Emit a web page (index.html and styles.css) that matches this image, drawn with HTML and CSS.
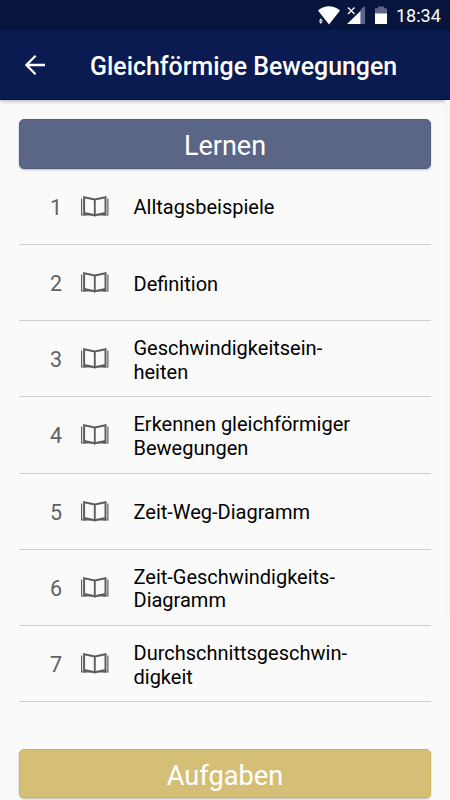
FILE: index.html
```html
<!DOCTYPE html>
<html lang="de">
<head>
<meta charset="utf-8">
<title>Gleichförmige Bewegungen</title>
<link rel="stylesheet" href="styles.css">
</head>
<body>
<svg class="defs" aria-hidden="true">
  <symbol id="book" viewBox="0 0 28 21">
    <path d="M3.1 1.2L13.8 3.4L24.5 1.2V17L13.8 19.3L3.1 17Z" fill="none" stroke="#5e5e5e" stroke-width="2"/>
    <path d="M13.8 3V20" fill="none" stroke="#5e5e5e" stroke-width="1.9"/>
    <path d="M2.5 16.6L13.7 18.4L25 16.6V19.4H15.5L13.7 20.8L12 19.4H2.5Z" fill="#5e5e5e"/>
    <path d="M.6 2.6V18.9H5M26.9 2.6V18.9H22" fill="none" stroke="#606060" stroke-width="1.2"/>
  </symbol>
</svg>
<div class="screen">
  <div class="status">
    <svg class="status-icons" viewBox="0 0 72 20">
      <path d="M0 4.4Q11-4 22 4.4L11 18.5Z" fill="#fff"/>
      <path d="M2.8 12.2L4.4 14.2V16L2.8 18L1.2 16V14.2Z" fill="#fff" stroke="#07153d" stroke-width=".3"/>
      <path d="M1.2 15.1H4.4" stroke="#07153d" stroke-width=".6"/>
      <path d="M42.5 3.5L47 0V18H42.5Z" fill="#5c648b"/>
      <path d="M29 18L42.5 5V18Z" fill="#fff"/>
      <path d="M30 1.5L36.5 8M36.5 1.5L30 8" stroke="#fff" stroke-width="1.3"/>
      <path d="M57 2.2H60V.4H66V2.2H69V8H57Z" fill="#5c648b"/>
      <path d="M57 7.5H69V18H57Z" fill="#fff"/>
    </svg>
    <span class="clock">18:34</span>
  </div>
  <header class="appbar">
    <svg class="back" viewBox="0 0 20 20"><path d="M20 10H1.6M10.6 .8L1.4 10L10.6 19.2" fill="none" stroke="#fff" stroke-width="2.3"/></svg>
    <h1>Gleichförmige Bewegungen</h1>
  </header>
  <main class="content">
    <div class="button learn">Lernen</div>
    <div class="list">
      <div class="row"><span class="num">1</span><svg class="book"><use href="#book"/></svg><span class="label">Alltagsbeispiele</span></div>
      <div class="row"><span class="num">2</span><svg class="book"><use href="#book"/></svg><span class="label">Definition</span></div>
      <div class="row"><span class="num">3</span><svg class="book"><use href="#book"/></svg><span class="label">Geschwindigkeitsein-<br>heiten</span></div>
      <div class="row"><span class="num">4</span><svg class="book"><use href="#book"/></svg><span class="label">Erkennen gleichförmiger<br>Bewegungen</span></div>
      <div class="row"><span class="num">5</span><svg class="book"><use href="#book"/></svg><span class="label">Zeit-Weg-Diagramm</span></div>
      <div class="row"><span class="num">6</span><svg class="book"><use href="#book"/></svg><span class="label">Zeit-Geschwindigkeits-<br>Diagramm</span></div>
      <div class="row"><span class="num">7</span><svg class="book"><use href="#book"/></svg><span class="label">Durchschnittsgeschwin-<br>digkeit</span></div>
    </div>
    <div class="button tasks">Aufgaben</div>
    <div class="scrollbar"></div>
  </main>
</div>
</body>
</html>
```
FILE: styles.css
```css
* { box-sizing: border-box; }
body { margin: 0; font-family: Roboto, "Liberation Sans", sans-serif; background: #fafafa; }
.defs { display: none; }
.screen { width: 450px; height: 800px; overflow: hidden; display: flex; flex-direction: column; }
.status { height: 30px; flex: none; background: #07153d; display: flex; align-items: flex-start; justify-content: flex-end; padding: 6px 10px 0 0; }
.status-icons { width: 72px; height: 20px; margin-right: 6px; }
.clock { color: #fff; font-size: 18px; line-height: 20px; width: 44px; white-space: nowrap; }
.appbar { height: 70px; flex: none; position: relative; background: #0a1b51; border-bottom: 1px solid #06113a; box-shadow: 0 1px 4px rgba(0, 0, 0, .3); display: flex; align-items: center; padding: 1px 0 0 25px; }
.back { width: 20px; height: 20px; margin-right: 45px; }
h1 { margin: 0; padding-top: 2px; color: #fff; font-size: 24.9px; font-weight: 500; white-space: nowrap; }
.content { position: relative; flex: 1; padding: 19px 19px 0; }
.button { height: 49.5px; border-radius: 5px; color: #fff; font-size: 27px; line-height: 52px; text-align: center; }
.learn { background: #5b6585; border: 1px solid #566082; box-shadow: 0 1px 2px rgba(40, 50, 90, .3); }
.tasks { margin-top: 46.7px; background: #d5bf77; border: 1px solid #cfb65c; box-shadow: 0 1px 2px rgba(70, 60, 20, .35); font-size: 27.2px; }
.row { height: 76.25px; border-bottom: 1px solid #cfcfcf; display: flex; align-items: center; padding-left: 31px; }
.num { width: 31px; padding-top: 2px; color: #626262; font-size: 21.5px; }
.book { width: 28px; height: 21px; margin-right: 24.5px; overflow: visible; }
.label { padding-top: 4px; color: #000; font-size: 20px; line-height: 23.7px; white-space: nowrap; }
.scrollbar { position: absolute; right: 0; top: 0; width: 5px; height: 516px; background: #f6f6f6; }
```
